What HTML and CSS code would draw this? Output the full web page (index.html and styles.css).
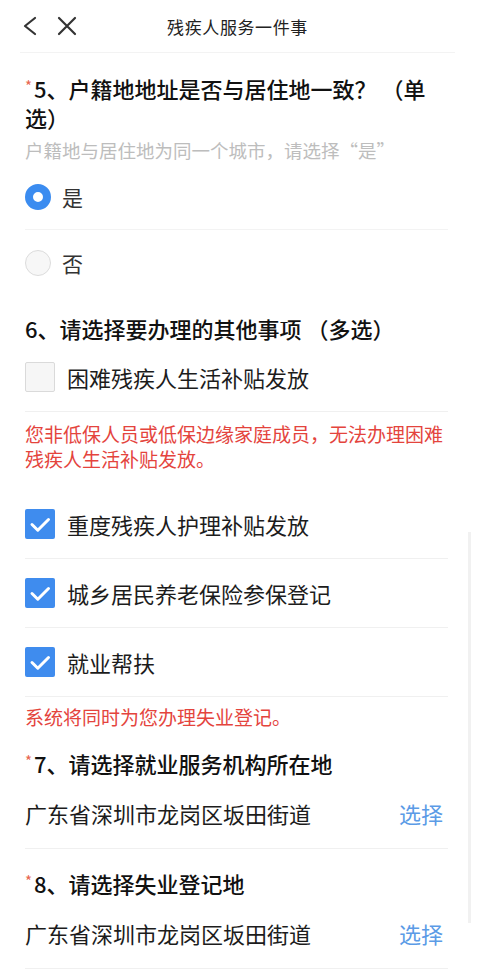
FILE: index.html
```html
<!DOCTYPE html>
<html lang="zh-CN">
<head>
    <meta charset="UTF-8">
    <meta name="viewport" content="width=device-width, initial-scale=1.0">
    <title>残疾人服务一件事</title>
    <link rel="stylesheet" href="styles.css">
</head>
<body>
    <div class="header">
        <div class="header-inner">
            <div class="nav-icons">
                <svg class="icon" width="20" height="24" viewBox="0 0 20 24"><path d="M15 4 L5 12 L15 20" fill="none" stroke="#333" stroke-width="2.2" stroke-linecap="round" stroke-linejoin="round"/></svg>
                <svg class="icon" width="22" height="22" viewBox="0 0 22 22"><path d="M3 3 L19 19 M19 3 L3 19" fill="none" stroke="#333" stroke-width="2.2" stroke-linecap="round"/></svg>
            </div>
            <div class="title">残疾人服务一件事</div>
            <div></div>
        </div>
    </div>

    <div class="content">
        <div class="question required q5">5、户籍地地址是否与居住地一致？ （单选）</div>
        <div class="hint">户籍地与居住地为同一个城市，请选择“是”</div>
        <div class="radio-list">
            <div class="radio-row">
                <span class="radio checked"></span>
                <span class="radio-label">是</span>
            </div>
            <div class="radio-row">
                <span class="radio"></span>
                <span class="radio-label">否</span>
            </div>
        </div>

        <div class="question q6">6、请选择要办理的其他事项 （多选）</div>
        <div class="check-row">
            <span class="checkbox"></span>
            <span class="check-label">困难残疾人生活补贴发放</span>
        </div>
        <div class="warn first-warn">您非低保人员或低保边缘家庭成员，无法办理困难残疾人生活补贴发放。</div>

        <div class="check-list">
            <div class="check-row">
                <span class="checkbox checked"><svg width="30" height="30" viewBox="0 0 30 30"><path d="M7 15.5 L12.8 21.2 L23.5 10.5" fill="none" stroke="#fff" stroke-width="3" stroke-linecap="round" stroke-linejoin="round"/></svg></span>
                <span class="check-label">重度残疾人护理补贴发放</span>
            </div>
            <div class="check-row">
                <span class="checkbox checked"><svg width="30" height="30" viewBox="0 0 30 30"><path d="M7 15.5 L12.8 21.2 L23.5 10.5" fill="none" stroke="#fff" stroke-width="3" stroke-linecap="round" stroke-linejoin="round"/></svg></span>
                <span class="check-label">城乡居民养老保险参保登记</span>
            </div>
            <div class="check-row">
                <span class="checkbox checked"><svg width="30" height="30" viewBox="0 0 30 30"><path d="M7 15.5 L12.8 21.2 L23.5 10.5" fill="none" stroke="#fff" stroke-width="3" stroke-linecap="round" stroke-linejoin="round"/></svg></span>
                <span class="check-label">就业帮扶</span>
            </div>
        </div>
        <div class="warn second-warn">系统将同时为您办理失业登记。</div>

        <div class="question required field-q">7、请选择就业服务机构所在地</div>
        <div class="field-row">
            <span class="field-value">广东省深圳市龙岗区坂田街道</span>
            <span class="choose">选择</span>
        </div>

        <div class="question required field-q">8、请选择失业登记地</div>
        <div class="field-row">
            <span class="field-value">广东省深圳市龙岗区坂田街道</span>
            <span class="choose">选择</span>
        </div>
    </div>

    <div class="scroll-thumb"></div>
</body>
</html>
```

FILE: styles.css
```css
body {
    margin: 0;
    font-family: "Noto Sans CJK SC", "Noto Sans", sans-serif;
    color: #222;
    background-color: #fff;
    width: 480px;
    overflow: hidden;
}
.header {
    padding: 0 25px 0 20px;
}
.header-inner {
    display: grid;
    grid-template-columns: 1fr auto 1fr;
    align-items: center;
    height: 52px;
    border-bottom: 1px solid #f3f3f3;
}
.nav-icons {
    display: flex;
    align-items: center;
    gap: 16px;
}
.icon {
    display: block;
}
.title {
    font-size: 17px;
    color: #222;
    letter-spacing: 0.6px;
}
.content {
    padding: 0 32px 0 25px;
}
.question {
    font-size: 22px;
    line-height: 29px;
    font-weight: 500;
    color: #111;
}
.required::before {
    content: "*";
    color: #e86550;
    font-size: 15px;
    font-weight: normal;
    vertical-align: top;
    line-height: 23px;
    margin-right: 2px;
}
.q5 {
    margin-top: 21px;
}
.hint {
    margin-top: 5px;
    font-size: 18.5px;
    line-height: 27px;
    color: #bdbdbd;
}
.radio-row {
    display: flex;
    align-items: center;
    height: 65px;
    border-bottom: 1px solid #f3f3f3;
}
.radio-row:last-child {
    border-bottom: none;
}
.radio {
    width: 26px;
    height: 26px;
    border-radius: 50%;
    border: 1px solid #dcdcdc;
    background-color: #f7f7f7;
    box-sizing: border-box;
    margin-right: 11px;
}
.radio.checked {
    border: 8px solid #3b8cf0;
    background-color: #fff;
}
.radio-label {
    font-size: 21px;
    color: #333;
}
.q6 {
    margin-top: 19px;
}
.check-row {
    display: flex;
    align-items: center;
    height: 68px;
    border-bottom: 1px solid #f0f0f0;
}
.checkbox {
    width: 30px;
    height: 30px;
    box-sizing: border-box;
    border: 1px solid #dadada;
    background-color: #f6f6f6;
    border-radius: 2px;
    margin-right: 12px;
}
.checkbox.checked {
    border: none;
    background-color: #3f8cee;
}
.checkbox svg {
    display: block;
}
.check-label {
    font-size: 22px;
    color: #1c1c1c;
}
.warn {
    font-size: 19px;
    line-height: 25px;
    color: #e4443d;
}
.first-warn {
    margin-top: 9px;
    margin-bottom: 19px;
}
.second-warn {
    margin-top: 7px;
}
.field-q {
    margin-top: 20px;
}
.field-row {
    display: flex;
    align-items: center;
    justify-content: space-between;
    height: 70px;
    border-bottom: 1px solid #f0f0f0;
}
.field-value {
    font-size: 22px;
    color: #1c1c1c;
}
.choose {
    font-size: 22px;
    color: #5b9be6;
    margin-right: 5px;
}
.scroll-thumb {
    position: absolute;
    top: 532px;
    left: 468px;
    width: 3px;
    height: 391px;
    background-color: #f1f1f1;
}
```
